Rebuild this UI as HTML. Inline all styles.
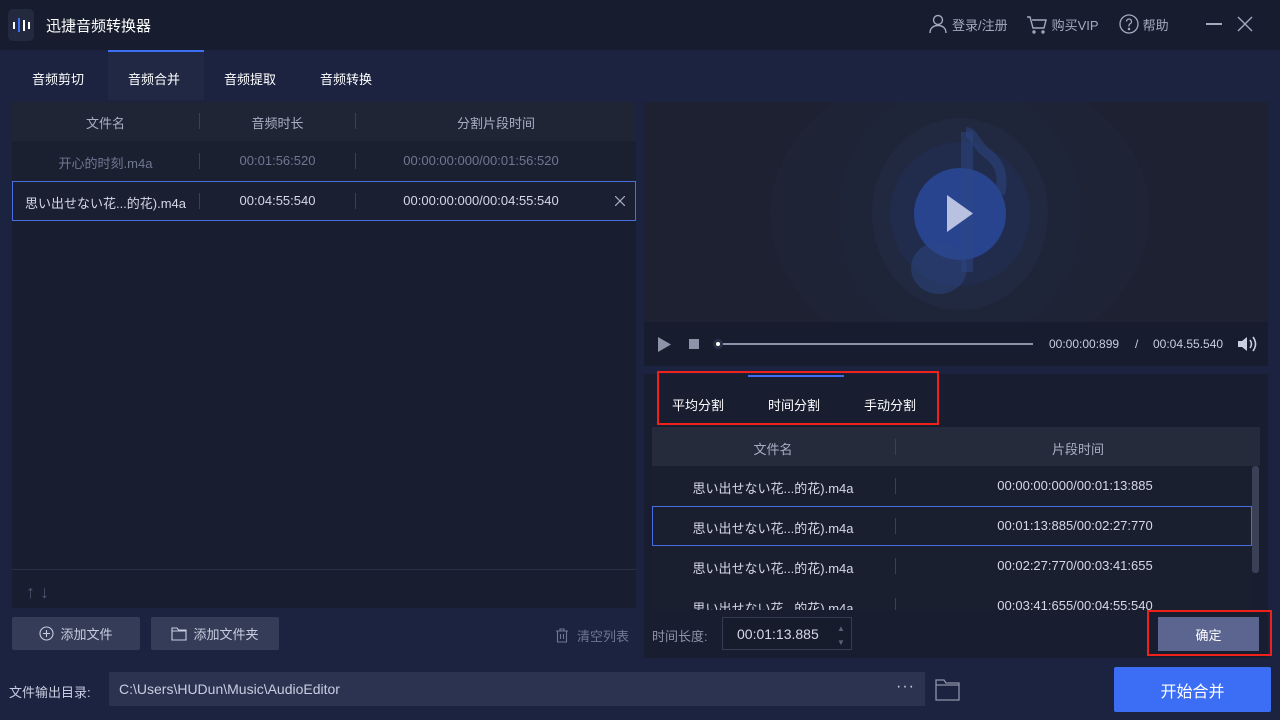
<!DOCTYPE html>
<html><head><meta charset="utf-8"><style>
*{margin:0;padding:0;box-sizing:border-box}
body{width:1280px;height:720px;background:#1b2341;font-family:"Liberation Sans","Noto Sans CJK SC",sans-serif;color:#c8cde0;font-size:13px;position:relative;overflow:hidden}
.abs{position:absolute}
.c{display:flex;align-items:center;justify-content:center}
</style></head><body>
<div class="abs" style="left:0;top:0;width:1280px;height:50px;background:#171c2e"></div>
<div class="abs c" style="left:8px;top:9px;width:26px;height:32px;background:#232a40;border-radius:5px">
<svg width="20" height="16"><rect x="2" y="5" width="2" height="7" fill="#fff"/><rect x="7" y="1" width="2" height="14" fill="#3d6ef5"/><rect x="12" y="3" width="2" height="11" fill="#fff"/><rect x="17" y="5" width="2" height="7" fill="#fff"/></svg></div>
<div class="abs" style="left:46px;top:15px;font-size:15px;color:#fff">迅捷音频转换器</div>
<div class="abs" style="left:928px;top:14px;display:flex;align-items:center;gap:4px;color:#a4aabe;font-size:13px">
<svg width="20" height="20" fill="none" stroke="#a4aabe" stroke-width="1.4"><circle cx="10" cy="6" r="4.5"/><path d="M2 19c0-5 3.5-7.5 8-7.5s8 2.5 8 7.5"/></svg>登录/注册
<svg style="margin-left:14px" width="22" height="20" fill="none" stroke="#a4aabe" stroke-width="1.4"><path d="M1 3h3l3 11h11l2-8H6"/><circle cx="8" cy="18" r="1"/><circle cx="17" cy="18" r="1"/></svg>购买VIP
<svg style="margin-left:16px" width="20" height="20" fill="none" stroke="#a4aabe" stroke-width="1.3"><circle cx="10" cy="10" r="9"/><path d="M7.5 7.5a2.5 2.5 0 1 1 3.5 2.3c-.7.4-1 .9-1 1.7v1"/><circle cx="10" cy="15" r=".6" fill="#a4aabe"/></svg>帮助</div>
<div class="abs" style="left:1206px;top:23px;width:16px;height:1.5px;background:#a4aabe"></div>
<svg class="abs" style="left:1237px;top:16px" width="16" height="16" stroke="#a4aabe" stroke-width="1.4"><path d="M1 1l14 14M15 1L1 15"/></svg>

<div class="abs" style="left:108px;top:50px;width:96px;height:50px;background:#202843;border-top:2px solid #3d6ef5"></div>
<div class="abs" style="left:32px;top:69px;color:#fff;font-size:13px;word-spacing:0">音频剪切</div>
<div class="abs" style="left:128px;top:69px;color:#fff">音频合并</div>
<div class="abs" style="left:224px;top:69px;color:#fff">音频提取</div>
<div class="abs" style="left:320px;top:69px;color:#fff">音频转换</div>

<!-- left panel -->
<div class="abs" style="left:12px;top:102px;width:624px;height:506px;background:#181d2f"></div>
<div class="abs" style="left:12px;top:102px;width:624px;height:39px;background:#1f2535"></div>
<div class="abs" style="left:12px;top:141px;width:624px;height:40px;background:#1b2031"></div>
<div class="abs" style="left:12px;top:181px;width:624px;height:40px;border:1px solid #4a6ee0;background:#1a1f31"></div>
<div class="abs" style="left:199px;top:113px;width:1px;height:16px;background:#3a4055"></div>
<div class="abs" style="left:355px;top:113px;width:1px;height:16px;background:#3a4055"></div>
<div class="abs" style="left:199px;top:153px;width:1px;height:16px;background:#3a4055"></div>
<div class="abs" style="left:355px;top:153px;width:1px;height:16px;background:#3a4055"></div>
<div class="abs" style="left:199px;top:193px;width:1px;height:16px;background:#3a4055"></div>
<div class="abs" style="left:355px;top:193px;width:1px;height:16px;background:#3a4055"></div>
<div class="abs c" style="left:12px;top:113px;width:187px;color:#a9afc3">文件名</div>
<div class="abs c" style="left:200px;top:113px;width:155px;color:#a9afc3">音频时长</div>
<div class="abs c" style="left:356px;top:113px;width:280px;color:#a9afc3">分割片段时间</div>
<div class="abs c" style="left:12px;top:153px;width:187px;color:#6f7792">开心的时刻.m4a</div>
<div class="abs c" style="left:200px;top:153px;width:155px;color:#6f7792">00:01:56:520</div>
<div class="abs c" style="left:356px;top:153px;width:250px;color:#6f7792">00:00:00:000/00:01:56:520</div>
<div class="abs c" style="left:12px;top:193px;width:187px;color:#d4d8e6">思い出せない花...的花).m4a</div>
<div class="abs c" style="left:200px;top:193px;width:155px;color:#d4d8e6">00:04:55:540</div>
<div class="abs c" style="left:356px;top:193px;width:250px;color:#d4d8e6">00:00:00:000/00:04:55:540</div>
<svg class="abs" style="left:615px;top:196px" width="10" height="10" stroke="#a9afc3" stroke-width="1.2"><path d="M0 0l10 10M10 0L0 10"/></svg>
<div class="abs" style="left:12px;top:569px;width:624px;height:1px;background:#2a3044"></div>
<div class="abs" style="left:26px;top:582px;color:#4f5670;font-size:18px">↑ ↓</div>
<div class="abs c" style="left:12px;top:617px;width:128px;height:33px;background:#353c57;border-radius:2px;color:#c8cde0;gap:6px"><svg width="15" height="15" fill="none" stroke="#c8cde0" stroke-width="1.1"><circle cx="7.5" cy="7.5" r="6.5"/><path d="M7.5 4v7M4 7.5h7"/></svg>添加文件</div>
<div class="abs c" style="left:151px;top:617px;width:128px;height:33px;background:#353c57;border-radius:2px;color:#c8cde0;gap:6px"><svg width="16" height="14" fill="none" stroke="#c8cde0" stroke-width="1.1"><path d="M1 1h5l1.5 2H15v10H1z M1 4h14"/></svg>添加文件夹</div>
<div class="abs" style="left:555px;top:626px;color:#6f7792;display:flex;gap:8px;align-items:center"><svg width="14" height="15" fill="none" stroke="#6f7792" stroke-width="1.1"><path d="M1 3h12M5 3V1h4v2M2.5 3v11h9V3M5.5 6v5M8.5 6v5"/></svg>清空列表</div>

<!-- right video -->
<div class="abs" style="left:644px;top:102px;width:624px;height:220px;background:#1d2131;overflow:hidden">
<svg width="624" height="220"><ellipse cx="316" cy="112" rx="190" ry="150" fill="#1e2335"/><ellipse cx="316" cy="112" rx="122" ry="130" fill="#1f2539"/><ellipse cx="316" cy="112" rx="88" ry="96" fill="#202940"/><ellipse cx="316" cy="112" rx="70" ry="72" fill="#212c4c"/><ellipse cx="316" cy="112" rx="46" ry="46" fill="#28448e"/>
<rect x="317" y="30" width="12" height="140" fill="#2c4584" opacity=".5"/><path d="M322 30c8 0 10 14 22 22 12 10 16 20 12 40" stroke="#2c4584" stroke-width="10" fill="none" opacity=".5"/><ellipse cx="295" cy="166" rx="28" ry="26" fill="#2c4584" opacity=".5"/>
<path d="M303 93v37l26-18.5z" fill="#b8c1e0"/></svg></div>
<div class="abs" style="left:644px;top:322px;width:624px;height:44px;background:#171c2e"></div>
<svg class="abs" style="left:658px;top:337px" width="14" height="15"><path d="M0 0v15l13-7.5z" fill="#8d93a8"/></svg>
<div class="abs" style="left:689px;top:339px;width:10px;height:10px;background:#8d93a8"></div>
<div class="abs" style="left:718px;top:343px;width:315px;height:2px;background:#8d93a8"></div>
<div class="abs" style="left:713px;top:339px;width:10px;height:10px;border-radius:50%;background:#2a3046"></div>
<div class="abs" style="left:716px;top:342px;width:4px;height:4px;border-radius:50%;background:#fff"></div>
<div class="abs" style="left:1049px;top:337px;color:#c8cde0;font-size:12px">00:00:00:899</div>
<div class="abs" style="left:1135px;top:337px;color:#c8cde0;font-size:12px">/</div>
<div class="abs" style="left:1153px;top:337px;color:#c8cde0;font-size:12px">00:04.55.540</div>
<svg class="abs" style="left:1237px;top:335px" width="20" height="18"><path d="M1 6h4l5-4v14l-5-4H1z" fill="#c8cde0"/><path d="M13 5q3 4 0 8M16 2q5 7 0 14" stroke="#c8cde0" stroke-width="1.6" fill="none"/></svg>

<!-- lower right -->
<div class="abs" style="left:644px;top:374px;width:624px;height:284px;background:#181d2f"></div>
<div class="abs" style="left:748px;top:375px;width:96px;height:2px;background:#3d6ef5"></div>
<div class="abs" style="left:672px;top:395px;color:#fff">平均分割</div>
<div class="abs" style="left:768px;top:395px;color:#fff">时间分割</div>
<div class="abs" style="left:864px;top:395px;color:#fff">手动分割</div>
<div class="abs" style="left:657px;top:371px;width:282px;height:54px;border:2px solid #f0201b"></div>
<div class="abs" style="left:652px;top:427px;width:608px;height:39px;background:#262b3c"></div>
<div class="abs" style="left:652px;top:466px;width:600px;height:144px;background:#1a1f30;overflow:hidden">
<div class="abs" style="left:0;top:40px;width:600px;height:40px;border:1px solid #4a6ee0"></div>
<div class="abs c" style="left:0;top:12px;width:242px;color:#d4d8e6">思い出せない花...的花).m4a</div>
<div class="abs c" style="left:243px;top:12px;width:360px;color:#d4d8e6">00:00:00:000/00:01:13:885</div>
<div class="abs c" style="left:0;top:52px;width:242px;color:#d4d8e6">思い出せない花...的花).m4a</div>
<div class="abs c" style="left:243px;top:52px;width:360px;color:#d4d8e6">00:01:13:885/00:02:27:770</div>
<div class="abs c" style="left:0;top:92px;width:242px;color:#d4d8e6">思い出せない花...的花).m4a</div>
<div class="abs c" style="left:243px;top:92px;width:360px;color:#d4d8e6">00:02:27:770/00:03:41:655</div>
<div class="abs c" style="left:0;top:132px;width:242px;color:#d4d8e6">思い出せない花...的花).m4a</div>
<div class="abs c" style="left:243px;top:132px;width:360px;color:#d4d8e6">00:03:41:655/00:04:55:540</div>
<div class="abs" style="left:243px;top:12px;width:1px;height:16px;background:#3a4055"></div>
<div class="abs" style="left:243px;top:52px;width:1px;height:16px;background:#3a4055"></div>
<div class="abs" style="left:243px;top:92px;width:1px;height:16px;background:#3a4055"></div>
<div class="abs" style="left:243px;top:132px;width:1px;height:16px;background:#3a4055"></div>
</div>
<div class="abs" style="left:895px;top:439px;width:1px;height:16px;background:#3a4055"></div>
<div class="abs c" style="left:652px;top:439px;width:242px;color:#a9afc3">文件名</div>
<div class="abs c" style="left:896px;top:439px;width:364px;color:#a9afc3">片段时间</div>
<div class="abs" style="left:1252px;top:466px;width:7px;height:107px;background:#3a4055;border-radius:3px"></div>
<div class="abs" style="left:652px;top:626px;color:#8d93a8">时间长度:</div>
<div class="abs" style="left:722px;top:617px;width:130px;height:33px;border:1px solid #363c52;background:#171c2c"></div>
<div class="abs" style="left:737px;top:626px;color:#d4d8e6;font-size:14px">00:01:13.885</div>
<div class="abs" style="left:837px;top:622px;color:#5c6378;font-size:8px;line-height:14px">▲<br>▼</div>
<div class="abs c" style="left:1158px;top:617px;width:101px;height:34px;background:#5c6590;color:#fff">确定</div>
<div class="abs" style="left:1147px;top:610px;width:125px;height:46px;border:2px solid #f0201b"></div>

<!-- bottom -->
<div class="abs" style="left:9px;top:682px;color:#c8cde0">文件输出目录:</div>
<div class="abs" style="left:109px;top:672px;width:816px;height:34px;background:#2c3350"></div>
<div class="abs" style="left:119px;top:681px;color:#c8cde0;font-size:14px">C:\Users\HUDun\Music\AudioEditor</div>
<div class="abs" style="left:896px;top:678px;color:#c8cde0;font-size:16px;letter-spacing:1px">···</div>
<svg class="abs" style="left:935px;top:679px" width="25" height="22" fill="none" stroke="#8d93a8" stroke-width="1.3"><path d="M1 1h8l2 3h13v17H1z M1 6h23"/></svg>
<div class="abs c" style="left:1114px;top:667px;width:157px;height:45px;background:#3b6ef5;border-radius:2px;color:#fff;font-size:16px">开始合并</div>
</body></html>
